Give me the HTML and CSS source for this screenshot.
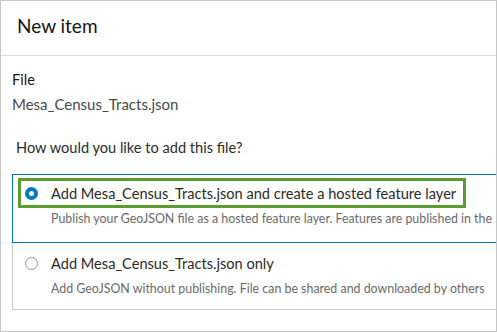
FILE: index.html
```html
<!DOCTYPE html>
<html lang="en">
<head>
  <meta charset="UTF-8" />
  <meta name="viewport" content="width=device-width, initial-scale=1" />
  <title>New item</title>
  <link rel="stylesheet" href="styles.css">
</head>
<body>

  <div class="dialog">
    <div class="dialog-header">New item</div>

    <div class="dialog-body">
      <!-- FILE INFO -->
      <div class="field">
        <div class="field-label">File</div>
        <div class="field-value">Mesa_Census_Tracts.json</div>
      </div>

      <div class="question">How would you like to add this file?</div>

      <!-- OPTIONS -->
      <div class="options">
        <div class="option selected">
          <div class="option-head highlight">
            <span class="radio checked"></span>
            <span class="option-title">Add Mesa_Census_Tracts.json and create a hosted feature layer</span>
          </div>
          <div class="option-desc">Publish your GeoJSON file as a hosted feature layer. Features are published in the</div>
        </div>

        <div class="option">
          <div class="option-head">
            <span class="radio"></span>
            <span class="option-title">Add Mesa_Census_Tracts.json only</span>
          </div>
          <div class="option-desc">Add GeoJSON without publishing. File can be shared and downloaded by others</div>
        </div>
      </div>
    </div>
  </div>

</body>
</html>
```

FILE: styles.css
```css
body {
  font-family: Lato, "Noto Sans", Arial, sans-serif;
  margin: 0;
  background: white;
  color: #151515;
}

.dialog {
  width: 497px;
  height: 332px;
  box-sizing: border-box;
  border: 1px solid #c6c6c6;
  overflow: hidden;
}

.dialog-header {
  height: 55px;
  box-sizing: border-box;
  padding: 13px 16px 0;
  font-size: 19px;
  line-height: 24px;
  border-bottom: 1px solid #dcdcdc;
}

.dialog-body {
  padding: 14px 0 0 11px;
}

.field-label {
  font-size: 14.6px;
  line-height: 20px;
}

.field-value {
  font-size: 15px;
  line-height: 20px;
  margin-top: 4px;
  color: #4a4a4a;
}

.question {
  font-size: 14.6px;
  line-height: 20px;
  margin: 24px 0 0 4px;
  color: #2b2b2b;
}

.options {
  width: 520px;
  margin-top: 16px;
}

.option {
  border: 1px solid #cacaca;
  border-top: none;
  padding: 5px 0 12px 5px;
}

.option.selected {
  border: 1px solid #0079c1;
  padding: 3px 0 15px 5px;
}

.option-head {
  display: flex;
  align-items: center;
  width: fit-content;
  height: 24px;
  padding: 0 7px 0 4px;
  border: 3px solid transparent;
}

.highlight {
  border-color: #5d9c2e;
}

.radio {
  width: 13px;
  height: 13px;
  box-sizing: border-box;
  border: 1px solid #959595;
  border-radius: 50%;
  background: white;
  margin-right: 13px;
  flex-shrink: 0;
}

.radio.checked {
  border: 4px solid #0079c1;
}

.option-title {
  font-size: 14.6px;
  color: #2b2b2b;
  white-space: nowrap;
}

.option-desc {
  font-size: 12.4px;
  line-height: 16px;
  margin: 3px 0 0 33px;
  color: #6a6a6a;
  white-space: nowrap;
}
```
